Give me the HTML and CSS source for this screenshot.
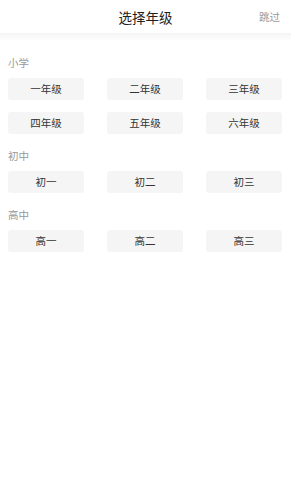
FILE: index.html
```html
<!DOCTYPE html>
<html lang="zh-CN">
<head>
    <meta charset="UTF-8">
    <meta name="viewport" content="width=device-width, initial-scale=1.0">
    <title>选择年级</title>
    <link rel="stylesheet" href="styles.css">
</head>
<body>

    <div class="header">
        <div class="title">选择年级</div>
        <div class="skip">跳过</div>
    </div>

    <div class="section first">
        <div class="label">小学</div>
        <div class="grid">
            <div class="grade">一年级</div>
            <div class="grade">二年级</div>
            <div class="grade">三年级</div>
            <div class="grade">四年级</div>
            <div class="grade">五年级</div>
            <div class="grade">六年级</div>
        </div>
    </div>

    <div class="section">
        <div class="label">初中</div>
        <div class="grid">
            <div class="grade">初一</div>
            <div class="grade">初二</div>
            <div class="grade">初三</div>
        </div>
    </div>

    <div class="section">
        <div class="label">高中</div>
        <div class="grid">
            <div class="grade">高一</div>
            <div class="grade">高二</div>
            <div class="grade">高三</div>
        </div>
    </div>

</body>
</html>
```

FILE: styles.css
```css
body {
    margin: 0;
    font-family: "Noto Sans CJK SC", "Noto Sans", sans-serif;
    background: #fff;
    color: #333;
}
.header {
    position: relative;
    height: 33px;
    display: flex;
    justify-content: center;
    align-items: center;
}
.header::after {
    content: "";
    position: absolute;
    left: 0;
    right: 0;
    top: 33px;
    height: 8px;
    background: linear-gradient(#f4f4f4, #fff);
}
.title {
    font-size: 13.5px;
    color: #222;
}
.skip {
    position: absolute;
    right: 11px;
    top: 9px;
    font-size: 10.5px;
    color: #999;
}
.section {
    padding: 0 9px 0 8px;
}
.label {
    font-size: 10.5px;
    line-height: 14px;
    color: #999;
    margin: 15px 0 8px;
}
.first .label {
    margin-top: 23px;
}
.grid {
    display: grid;
    grid-template-columns: repeat(3, 76px);
    justify-content: space-between;
    row-gap: 12px;
}
.grade {
    height: 22px;
    line-height: 22px;
    text-align: center;
    font-size: 10.5px;
    background: #f5f5f5;
    border-radius: 3px;
    color: #333;
}
```
